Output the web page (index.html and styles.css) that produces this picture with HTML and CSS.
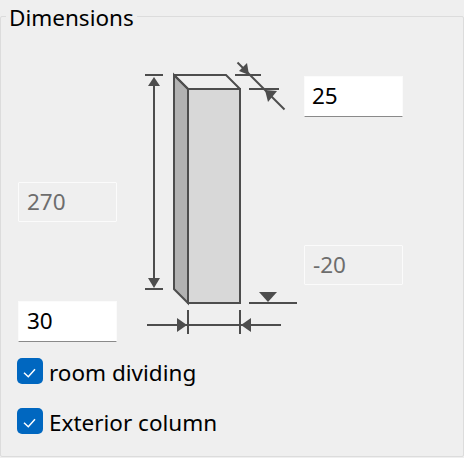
FILE: index.html
```html
<!DOCTYPE html>
<html lang="en">
<head>
<meta charset="utf-8">
<title>Dimensions</title>
<link rel="stylesheet" href="styles.css">
</head>
<body>
<section class="group">
  <h2 class="legend">Dimensions</h2>
  <div class="grid">
    <svg class="diagram" viewBox="117 17 187 325" width="187" height="325" aria-hidden="true">
      <polygon class="side" points="174,75 188,89 188,303 174,289"/>
      <rect class="front" x="188" y="89" width="52" height="214"/>
      <polyline class="ln" points="174,75 226,75 240,89"/>
      <line class="ln" x1="174" y1="75" x2="188" y2="89"/>
      <line class="ln" x1="145" y1="75" x2="163" y2="75"/>
      <line class="ln" x1="145" y1="289" x2="163" y2="289"/>
      <line class="ln" x1="154" y1="80" x2="154" y2="284"/>
      <polygon class="head" points="154,77 160,86 148,86"/>
      <polygon class="head" points="154,288 160,278 148,278"/>
      <line class="ln" x1="235" y1="75" x2="261" y2="75"/>
      <line class="ln" x1="249" y1="89" x2="279" y2="89"/>
      <line class="ln" x1="237.5" y1="62.5" x2="284.5" y2="109.5"/>
      <polygon class="head" points="249,75 239,71 247,63"/>
      <polygon class="head" points="265,90 277,91 268,102"/>
      <line class="ln" x1="188" y1="310" x2="188" y2="334"/>
      <line class="ln" x1="240" y1="310" x2="240" y2="334"/>
      <line class="ln" x1="147" y1="325" x2="281" y2="325"/>
      <polygon class="head" points="187,325 177,318 177,332"/>
      <polygon class="head" points="241,325 251,318 251,332"/>
      <line class="ln" x1="249" y1="303" x2="297" y2="303"/>
      <polygon class="head" points="259,292 277,292 268,302"/>
    </svg>
    <input class="field f-depth" type="text" value="25" aria-label="Depth">
    <input class="field f-height" type="text" value="270" disabled aria-label="Height">
    <input class="field f-offset" type="text" value="-20" disabled aria-label="Offset">
    <input class="field f-width" type="text" value="30" aria-label="Width">
  </div>
  <div class="checks">
    <label class="check">
      <span class="box"><svg viewBox="0 0 26 26" width="26" height="26"><polyline points="7,14.700 11.300,18.700 18,11.300"/></svg></span>
      <span class="check-text">room dividing</span>
    </label>
    <label class="check">
      <span class="box"><svg viewBox="0 0 26 26" width="26" height="26"><polyline points="7,14.700 11.300,18.700 18,11.300"/></svg></span>
      <span class="check-text">Exterior column</span>
    </label>
  </div>
</section>
</body>
</html>
```
FILE: styles.css
```css
* { box-sizing: border-box; }
html, body { margin: 0; height: 100%; }
body {
  width: 464px;
  height: 458px;
  overflow: hidden;
  background: #efefef;
  font-family: "Noto Sans", "Open Sans", sans-serif;
  font-size: 22.5px;
  color: #000;
  padding-top: 16px;
}
.group {
  position: relative;
  height: 441px;
  border: 1px solid #dcdcdc;
  border-radius: 2px;
  padding: 0 0 0 17px;
}
.legend {
  position: absolute;
  left: 5px;
  top: -14px;
  margin: 0;
  padding: 0 3px;
  background: linear-gradient(#efefef, #efefef) 0 0 / 100% 16px no-repeat;
  font-size: 22.5px;
  font-weight: 400;
  line-height: 30px;
}
.grid {
  display: grid;
  grid-template-columns: 99px 187px 99px;
  grid-template-rows: 59px 41px 65px 40px 23px 40px 16px 41px;
}
.diagram { grid-column: 2; grid-row: 1 / -1; display: block; }
.ln { stroke: #4d4d4d; stroke-width: 2; fill: none; }
.head { fill: #4d4d4d; }
.side { fill: #b2b2b2; stroke: #4d4d4d; stroke-width: 2; }
.front { fill: #d8d8d8; stroke: #4d4d4d; stroke-width: 2; }
.field {
  width: 99px;
  height: 100%;
  margin: 0;
  padding: 0 7.500px 2px 8px;
  font: inherit;
  color: #000;
  background: #fff;
  border: 1px solid #fbfbfb;
  border-bottom: 1px solid #8a8a8a;
  border-radius: 1px;
  outline: none;
}
.field:disabled {
  color: #6d6d6d;
  background: #efefef;
  border: 1px solid #fbfbfb;
}
.f-depth { grid-column: 3; grid-row: 2; padding-left: 7px; }
.f-height { grid-column: 1; grid-row: 4; }
.f-offset { grid-column: 3; grid-row: 6; }
.f-width { grid-column: 1; grid-row: 8; }
.checks {
  display: flex;
  flex-direction: column;
  gap: 24px;
  margin: 16px 0 0 -1px;
}
.check {
  display: flex;
  align-items: center;
  gap: 6px;
  height: 26px;
}
.check-text { position: relative; top: 1px; }
.box {
  flex: none;
  width: 26px;
  height: 26px;
  border-radius: 5px;
  background: #0067c0;
}
.box svg { display: block; }
.box polyline { fill: none; stroke: #fff; stroke-width: 1.500; }
```
